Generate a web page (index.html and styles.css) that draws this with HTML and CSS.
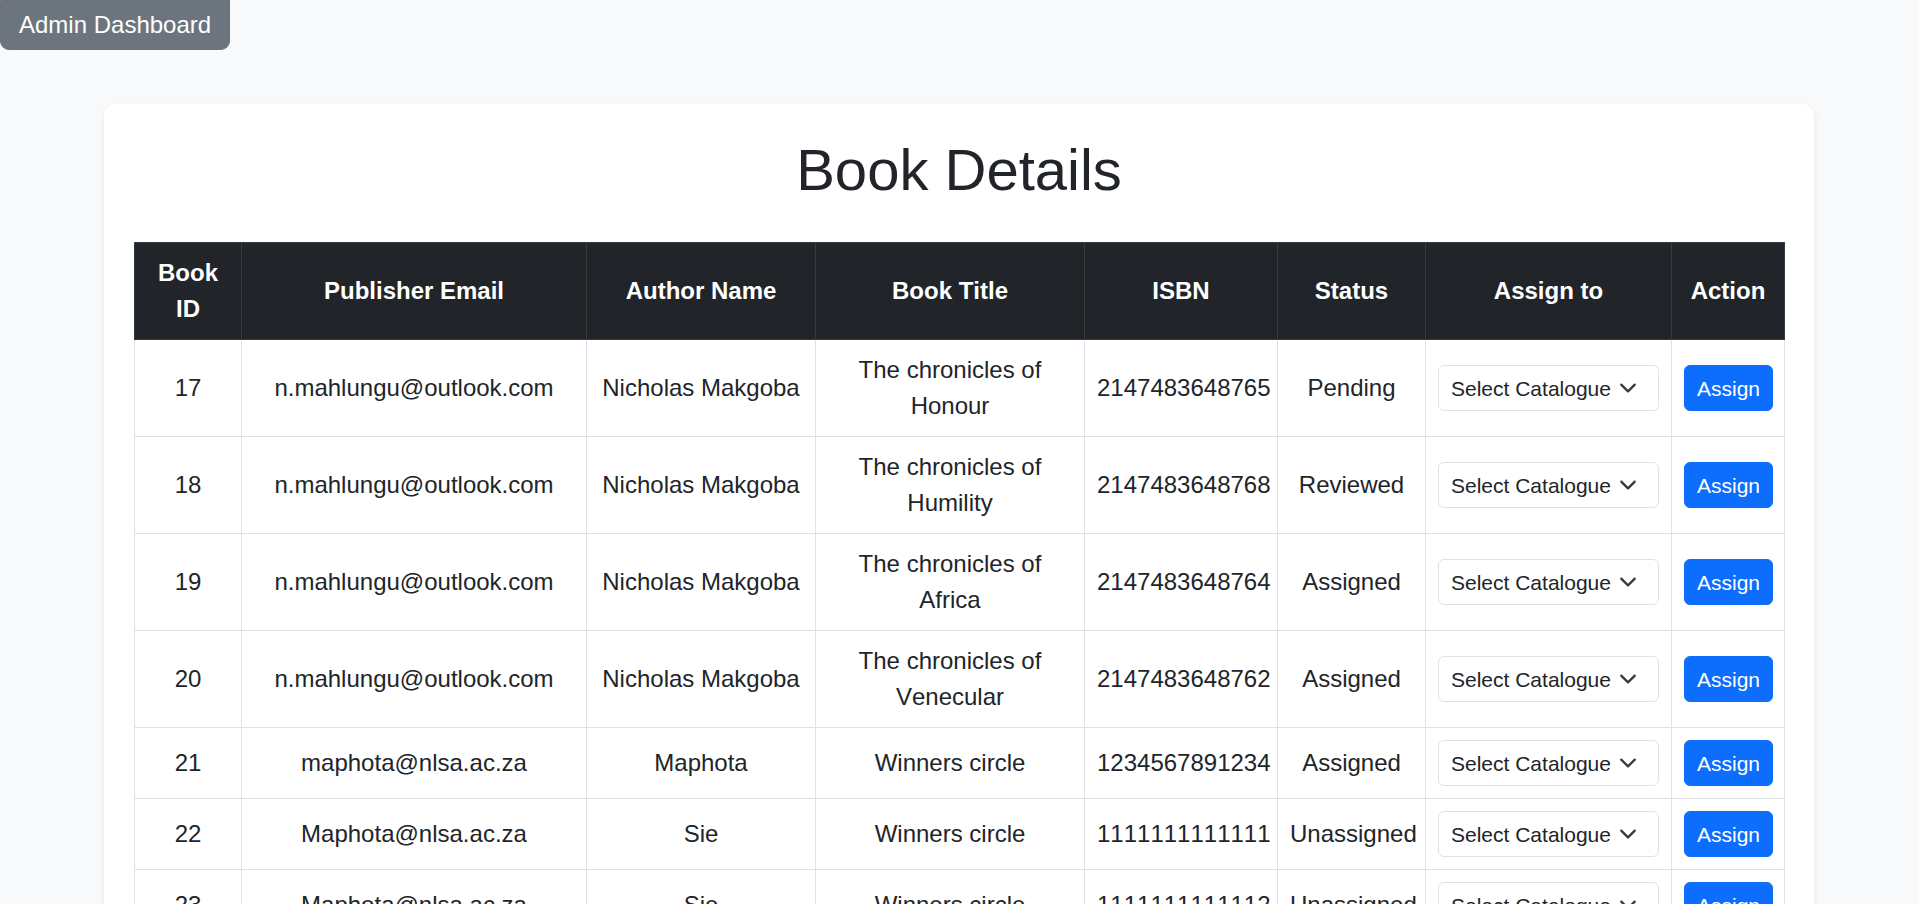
FILE: index.html
```html
<!DOCTYPE html>
<html lang="en">
<head>
<meta charset="utf-8">
<title>Book Details</title>
<link rel="stylesheet" href="styles.css">
</head>
<body class="page">
  <a class="btn-admin" href="#">Admin Dashboard</a>

  <main class="container">
    <section class="card">
      <h1 class="title">Book Details</h1>
      <table class="books">
        <colgroup>
          <col class="c-id"><col class="c-email"><col class="c-author"><col class="c-title">
          <col class="c-isbn"><col class="c-status"><col class="c-assign"><col class="c-action">
        </colgroup>
        <thead>
          <tr>
            <th>Book ID</th><th>Publisher Email</th><th>Author Name</th><th>Book Title</th>
            <th>ISBN</th><th>Status</th><th>Assign to</th><th>Action</th>
          </tr>
        </thead>
        <tbody>
          <tr>
            <td>17</td><td>n.mahlungu@outlook.com</td><td>Nicholas Makgoba</td><td>The chronicles of Honour</td>
            <td>2147483648765</td><td>Pending</td>
            <td><div class="select"><span class="select-text">Select Catalogue</span><svg class="chev" viewBox="0 0 16 16"><path d="m2 5 6 6 6-6"/></svg></div></td>
            <td><button class="btn-assign">Assign</button></td>
          </tr>
          <tr>
            <td>18</td><td>n.mahlungu@outlook.com</td><td>Nicholas Makgoba</td><td>The chronicles of Humility</td>
            <td>2147483648768</td><td>Reviewed</td>
            <td><div class="select"><span class="select-text">Select Catalogue</span><svg class="chev" viewBox="0 0 16 16"><path d="m2 5 6 6 6-6"/></svg></div></td>
            <td><button class="btn-assign">Assign</button></td>
          </tr>
          <tr>
            <td>19</td><td>n.mahlungu@outlook.com</td><td>Nicholas Makgoba</td><td>The chronicles of Africa</td>
            <td>2147483648764</td><td>Assigned</td>
            <td><div class="select"><span class="select-text">Select Catalogue</span><svg class="chev" viewBox="0 0 16 16"><path d="m2 5 6 6 6-6"/></svg></div></td>
            <td><button class="btn-assign">Assign</button></td>
          </tr>
          <tr>
            <td>20</td><td>n.mahlungu@outlook.com</td><td>Nicholas Makgoba</td><td>The chronicles of Venecular</td>
            <td>2147483648762</td><td>Assigned</td>
            <td><div class="select"><span class="select-text">Select Catalogue</span><svg class="chev" viewBox="0 0 16 16"><path d="m2 5 6 6 6-6"/></svg></div></td>
            <td><button class="btn-assign">Assign</button></td>
          </tr>
          <tr>
            <td>21</td><td>maphota@nlsa.ac.za</td><td>Maphota</td><td>Winners circle</td>
            <td>1234567891234</td><td>Assigned</td>
            <td><div class="select"><span class="select-text">Select Catalogue</span><svg class="chev" viewBox="0 0 16 16"><path d="m2 5 6 6 6-6"/></svg></div></td>
            <td><button class="btn-assign">Assign</button></td>
          </tr>
          <tr>
            <td>22</td><td>Maphota@nlsa.ac.za</td><td>Sie</td><td>Winners circle</td>
            <td>1111111111111</td><td>Unassigned</td>
            <td><div class="select"><span class="select-text">Select Catalogue</span><svg class="chev" viewBox="0 0 16 16"><path d="m2 5 6 6 6-6"/></svg></div></td>
            <td><button class="btn-assign">Assign</button></td>
          </tr>
          <tr>
            <td>23</td><td>Maphota@nlsa.ac.za</td><td>Sie</td><td>Winners circle</td>
            <td>1111111111112</td><td>Unassigned</td>
            <td><div class="select"><span class="select-text">Select Catalogue</span><svg class="chev" viewBox="0 0 16 16"><path d="m2 5 6 6 6-6"/></svg></div></td>
            <td><button class="btn-assign">Assign</button></td>
          </tr>
        </tbody>
      </table>
    </section>
  </main>
</body>
</html>
```

FILE: styles.css
```css
html {
  scrollbar-width: none;
}
html::-webkit-scrollbar {
  display: none;
}

.page {
  margin: 0;
  background: #f8f9fa;
  color: #212529;
  font-family: "Liberation Sans", Arial, sans-serif;
  font-size: 24px;
  line-height: 36px;
  font-kerning: none;
}

.btn-admin {
  display: inline-block;
  box-sizing: border-box;
  height: 50px;
  padding: 6px 18px;
  background: #6c757d;
  border: 1px solid #6c757d;
  border-radius: 0 0 9px 9px;
  color: #fff;
  text-decoration: none;
  font-size: 24px;
  line-height: 36px;
}

.container {
  width: 1710px;
  margin: 54px auto 0;
}

.card {
  background: #fff;
  border-radius: 12px;
  box-shadow: 0 3px 6px rgba(0, 0, 0, 0.075);
  padding: 30px;
}

.title {
  margin: 0 0 36px;
  text-align: center;
  font-size: 58px;
  line-height: 72px;
  font-weight: 400;
  color: #212529;
}

.books {
  width: 1650px;
  table-layout: fixed;
  border-collapse: collapse;
}

.c-id { width: 107px; }
.c-email { width: 345px; }
.c-author { width: 229px; }
.c-title { width: 269px; }
.c-isbn { width: 193px; }
.c-status { width: 148px; }
.c-assign { width: 246px; }
.c-action { width: 113px; }

.books th,
.books td {
  padding: 12px;
  text-align: center;
  vertical-align: middle;
  border: 1px solid #dee2e6;
}

.books th {
  background: #212529;
  color: #fff;
  font-weight: 700;
  border-color: #373b3e;
}

.books tbody tr:first-child td {
  border-top-color: #212529;
}

.select {
  display: flex;
  align-items: center;
  justify-content: space-between;
  box-sizing: border-box;
  width: 100%;
  height: 46px;
  padding: 0 18px 0 12px;
  border: 1px solid #dee2e6;
  border-radius: 6px;
  background: #fff;
  font-size: 21px;
  line-height: 31px;
  text-align: left;
  overflow: hidden;
}

.select-text {
  white-space: nowrap;
}

.chev {
  flex: none;
  width: 24px;
  height: 18px;
  fill: none;
  stroke: #343a40;
  stroke-width: 2;
  stroke-linecap: round;
  stroke-linejoin: round;
}

.btn-assign {
  height: 46px;
  padding: 0 12px;
  border: 1px solid #0d6efd;
  border-radius: 6px;
  background: #0d6efd;
  color: #fff;
  font-family: "Liberation Sans", Arial, sans-serif;
  font-size: 21px;
  line-height: 31px;
  cursor: pointer;
}
```
